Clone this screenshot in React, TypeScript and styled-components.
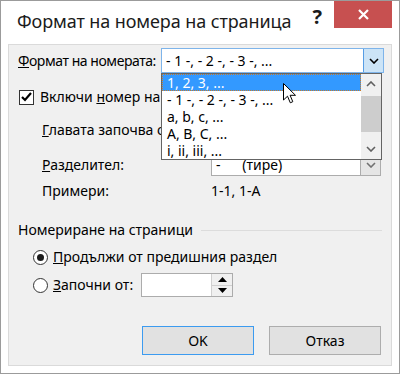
import React from "react";
import styled, { createGlobalStyle } from "styled-components";

const GlobalStyle = createGlobalStyle`
  body {
    margin: 0;
    background: #fff;
    font-family: "Noto Sans", "Open Sans", sans-serif;
  }
`;

const Window = styled.div`
  width: 400px;
  height: 374px;
  box-sizing: border-box;
  border: 1px solid #9b9b9b;
  background: #fff;
  display: flex;
  flex-direction: column;
  padding: 0 7px 7px;
`;

const TitleBar = styled.div`
  height: 43px;
  display: flex;
  align-items: flex-start;
`;

const Title = styled.div`
  flex: 1;
  margin: 8px 0 0 9px;
  font-size: 18px;
  line-height: 24px;
  letter-spacing: -0.1px;
  color: #1b1b1b;
`;

const HelpMark = styled.div`
  margin: 5px 12px 0 0;
  font-size: 20px;
  font-weight: bold;
  line-height: 22px;
  color: #1b1b1b;
`;

const CloseButton = styled.div`
  width: 58px;
  height: 27px;
  background: #c75050;
  display: flex;
  align-items: center;
  justify-content: center;
`;

const Panel = styled.div`
  flex: 1;
  position: relative;
  border: 1px solid #dadada;
  background: #f0f0f0;
  padding: 0 7px 0 9px;
  display: flex;
  flex-direction: column;
  font-size: 14px;
  color: #000;
`;

const Row = styled.div<{ $mt: number; $h: number; $indent?: number }>`
  display: flex;
  align-items: center;
  margin-top: ${(p) => p.$mt}px;
  height: ${(p) => p.$h}px;
  padding-left: ${(p) => p.$indent ?? 0}px;
  flex-shrink: 0;
`;

const Label = styled.span<{ $w?: number; $tight?: boolean }>`
  line-height: 20px;
  white-space: nowrap;
  width: ${(p) => (p.$w ? `${p.$w}px` : "auto")};
  letter-spacing: ${(p) => (p.$tight ? "-0.45px" : "normal")};
  flex-shrink: 0;
`;

const U = styled.span`
  text-decoration: underline;
`;

const Combo = styled.div<{ $w: number; $open?: boolean }>`
  width: ${(p) => p.$w}px;
  height: 100%;
  box-sizing: border-box;
  border: 1px solid ${(p) => (p.$open ? "#7eb4ea" : "#acacac")};
  background: #fff;
  display: flex;
  align-items: center;
`;

const ComboText = styled.span`
  flex: 1;
  padding-left: 4px;
  white-space: pre;
  line-height: 20px;
`;

const ComboButton = styled.div<{ $open?: boolean }>`
  width: 20px;
  align-self: stretch;
  box-sizing: border-box;
  background: ${(p) => (p.$open ? "#cce4f7" : "#e5e5e5")};
  border-left: 1px solid ${(p) => (p.$open ? "#569de5" : "#acacac")};
  display: flex;
  align-items: center;
  justify-content: center;
`;

const CheckBox = styled.div`
  width: 15px;
  height: 15px;
  box-sizing: border-box;
  border: 1px solid #333;
  background: #fff;
  margin-right: 6px;
  display: flex;
  align-items: center;
  justify-content: center;
`;

const Radio = styled.div<{ $checked?: boolean }>`
  width: 15px;
  height: 15px;
  box-sizing: border-box;
  border: 1px solid #333;
  border-radius: 50%;
  background: #fff;
  margin-right: 5px;
  display: flex;
  align-items: center;
  justify-content: center;
  &::after {
    content: "";
    display: ${(p) => (p.$checked ? "block" : "none")};
    width: 7px;
    height: 7px;
    border-radius: 50%;
    background: #1b1b1b;
  }
`;

const GroupLine = styled.div`
  flex: 1;
  height: 1px;
  background: #dcdcdc;
  margin: 0 2px 0 8px;
`;

const Spinner = styled.div`
  width: 92px;
  height: 100%;
  box-sizing: border-box;
  border: 1px solid #acacac;
  background: #fff;
  display: flex;
`;

const SpinField = styled.div`
  flex: 1;
`;

const SpinButtons = styled.div`
  width: 20px;
  border-left: 1px solid #d0d0d0;
  display: flex;
  flex-direction: column;
`;

const SpinHalf = styled.div<{ $bottom?: boolean }>`
  flex: 1;
  background: #f0f0f0;
  border-top: ${(p) => (p.$bottom ? "1px solid #d0d0d0" : "none")};
  display: flex;
  align-items: center;
  justify-content: center;
`;

const ButtonRow = styled.div`
  display: flex;
  justify-content: flex-end;
  gap: 15px;
  margin-top: 29px;
  padding-right: 3px;
`;

const DialogButton = styled.div<{ $default?: boolean }>`
  width: 112px;
  height: 29px;
  box-sizing: border-box;
  border: 1px solid ${(p) => (p.$default ? "#3c9bf0" : "#adadad")};
  background: #e1e1e1;
  display: flex;
  align-items: center;
  justify-content: center;
  line-height: 20px;
`;

const DropList = styled.div`
  position: absolute;
  left: 152px;
  top: 28px;
  width: 221px;
  height: 87px;
  box-sizing: border-box;
  border: 1px solid #646464;
  background: #fff;
  display: flex;
`;

const Items = styled.div`
  flex: 1;
  display: flex;
  flex-direction: column;
`;

const Item = styled.div<{ $selected?: boolean }>`
  height: 17px;
  box-sizing: border-box;
  padding-left: 4px;
  line-height: 16px;
  white-space: nowrap;
  color: ${(p) => (p.$selected ? "#fff" : "#000")};
  background: ${(p) => (p.$selected ? "#3399ff" : "transparent")};
  border: 1px dotted ${(p) => (p.$selected ? "#c77b2b" : "transparent")};
`;

const ScrollBar = styled.div`
  width: 20px;
  background: #f0f0f0;
  display: flex;
  flex-direction: column;
  align-items: stretch;
`;

const ScrollArrow = styled.div`
  height: 20px;
  display: flex;
  align-items: center;
  justify-content: center;
`;

const ScrollTrack = styled.div`
  flex: 1;
  display: flex;
  flex-direction: column;
`;

const ScrollThumb = styled.div`
  margin-top: 2px;
  height: 36px;
  background: #cdcdcd;
`;

const Cursor = styled.svg`
  position: absolute;
  left: 274px;
  top: 38px;
`;

const Chevron = ({ up, color = "#000" }: { up?: boolean; color?: string }) => (
  <svg width="10" height="6" viewBox="0 0 10 6">
    <polyline
      points={up ? "1,5 5,1 9,5" : "1,1 5,5 9,1"}
      fill="none"
      stroke={color}
      strokeWidth="1.6"
    />
  </svg>
);

const Triangle = ({ up }: { up?: boolean }) => (
  <svg width="9" height="5" viewBox="0 0 9 5">
    <polygon points={up ? "0,5 4.5,0 9,5" : "0,0 4.5,5 9,0"} fill="#000" />
  </svg>
);

const listItems = [
  "1, 2, 3, ...",
  "- 1 -, - 2 -, - 3 -, ...",
  "a, b, c, ...",
  "A, B, C, ...",
  "i, ii, iii, ...",
];

const App = () => {
  return (
    <>
      <GlobalStyle />
      <Window>
        <TitleBar>
          <Title>Формат на номера на страница</Title>
          <HelpMark>?</HelpMark>
          <CloseButton>
            <svg width="11" height="11" viewBox="0 0 11 11">
              <path d="M1 1 L10 10 M10 1 L1 10" stroke="#fff" strokeWidth="2.2" />
            </svg>
          </CloseButton>
        </TitleBar>
        <Panel>
          <Row $mt={3} $h={25}>
            <Label $w={143} $tight>
              <U>Ф</U>ормат на номерата:
            </Label>
            <Combo $w={223} $open>
              <ComboText>- 1 -, - 2 -, - 3 -, ...</ComboText>
              <ComboButton $open>
                <Chevron />
              </ComboButton>
            </Combo>
          </Row>

          <Row $mt={13} $h={22} $indent={1}>
            <CheckBox>
              <svg width="11" height="10" viewBox="0 0 11 10">
                <polyline points="1,5 4,8 10,1" fill="none" stroke="#000" strokeWidth="2.2" />
              </svg>
            </CheckBox>
            <Label>
              Включи <U>н</U>омер на главата
            </Label>
          </Row>

          <Row $mt={10} $h={23} $indent={24}>
            <Label $w={169}>
              <U>Г</U>лавата започва със стил:
            </Label>
            <Combo $w={170}>
              <ComboText />
              <ComboButton>
                <Chevron color="#707070" />
              </ComboButton>
            </Combo>
          </Row>

          <Row $mt={12} $h={23} $indent={24}>
            <Label $w={169}>
              <U>Р</U>азделител:
            </Label>
            <Combo $w={170}>
              <ComboText>{"-      (тире)"}</ComboText>
              <ComboButton>
                <Chevron color="#707070" />
              </ComboButton>
            </Combo>
          </Row>

          <Row $mt={5} $h={20} $indent={24}>
            <Label $w={169}>Примери:</Label>
            <Label>1-1, 1-A</Label>
          </Row>

          <Row $mt={19} $h={20}>
            <Label>Номериране на страници</Label>
            <GroupLine />
          </Row>

          <Row $mt={7} $h={20} $indent={15}>
            <Radio $checked />
            <Label>
              <U>П</U>родължи от предишния раздел
            </Label>
          </Row>

          <Row $mt={6} $h={24} $indent={15}>
            <Radio />
            <Label $w={88}>
              <U>З</U>апочни от:
            </Label>
            <Spinner>
              <SpinField />
              <SpinButtons>
                <SpinHalf>
                  <Triangle up />
                </SpinHalf>
                <SpinHalf $bottom>
                  <Triangle />
                </SpinHalf>
              </SpinButtons>
            </Spinner>
          </Row>

          <ButtonRow>
            <DialogButton $default>OK</DialogButton>
            <DialogButton>Отказ</DialogButton>
          </ButtonRow>

          <DropList>
            <Items>
              {listItems.map((item, i) => (
                <Item key={item} $selected={i === 0}>
                  {item}
                </Item>
              ))}
            </Items>
            <ScrollBar>
              <ScrollArrow>
                <Chevron up color="#606060" />
              </ScrollArrow>
              <ScrollTrack>
                <ScrollThumb />
              </ScrollTrack>
              <ScrollArrow>
                <Chevron color="#606060" />
              </ScrollArrow>
            </ScrollBar>
          </DropList>

          <Cursor width="14" height="22" viewBox="0 0 14 22">
            <path
              d="M0.5 0.5 L0.5 17 L4.5 13.2 L7.3 19.8 L9.8 18.7 L7.1 12.3 L12.5 12.3 Z"
              fill="#fff"
              stroke="#000"
              strokeWidth="1"
              strokeLinejoin="round"
            />
          </Cursor>
        </Panel>
      </Window>
    </>
  );
};

export default App;
